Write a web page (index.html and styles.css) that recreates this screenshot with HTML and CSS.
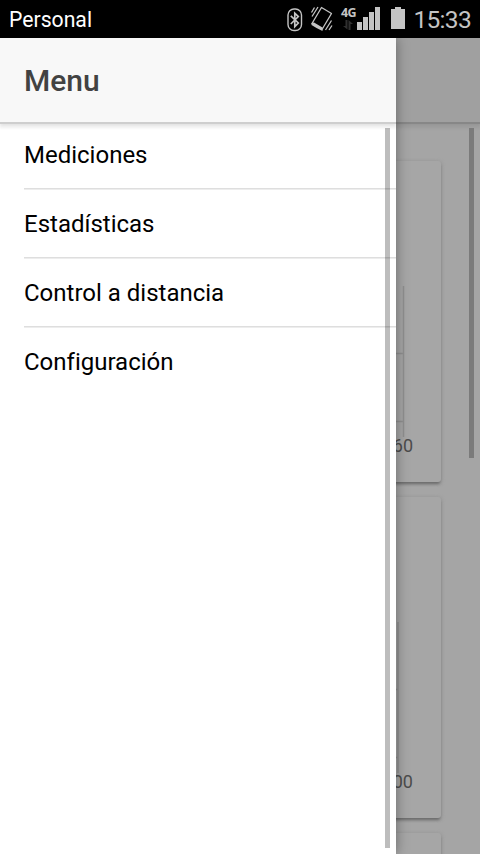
FILE: index.html
```html
<!DOCTYPE html>
<html lang="es">
<head>
<meta charset="utf-8">
<meta name="viewport" content="width=device-width, initial-scale=1">
<title>Menu</title>
<link rel="stylesheet" href="styles.css">
</head>
<body>
<header class="status">
  <span class="carrier">Personal</span>
  <div class="indicators">
    <svg class="bluetooth" width="16" height="24" viewBox="0 0 16 24" fill="none" stroke="#c4c4c4">
      <rect x="1" y="1" width="13.5" height="21.5" rx="6" stroke-width="1.4"/>
      <path d="M3.8 7.8 11.3 15 7.8 18.7V5.2L11.3 8.6 3.8 16" stroke-width="1.7"/>
    </svg>
    <svg class="vibrate" width="24" height="26" viewBox="0 0 24 26" fill="none" stroke="#c4c4c4" stroke-width="1.3">
      <path d="M11.5 1.5 21.5 7.5 12 23.5 2 17.5Z" stroke-linejoin="round"/>
      <path d="M1.5 17 4 16.5 12.5 21.5 12.5 25Q6 22 1.5 19Z" fill="#c4c4c4" stroke="none"/>
      <path d="M1.5 6.5 4.5 1.5M2 10.5 8 1M21.5 14.5 15.5 24M22 19.5 19 24"/>
    </svg>
    <div class="network">
      <span class="network-type">4G</span>
      <svg width="10" height="10" viewBox="0 0 10 10" fill="#303030">
        <path d="M2.5 0H4.5V9.5L0 6H2.5ZM5.5 0 10 4H7.5V10H5.5Z"/>
      </svg>
    </div>
    <svg class="signal" width="23" height="23" viewBox="0 0 23 23" fill="#c4c4c4">
      <path d="M0 15H5V23H0ZM6 10H11V23H6ZM12 5H17V23H12ZM18 0H23V23H18Z"/>
    </svg>
    <svg class="battery" width="14" height="22" viewBox="0 0 14 22" fill="#c4c4c4">
      <path d="M4 0H10V2H14V22H0V2H4Z"/>
    </svg>
    <time class="clock">15:33</time>
  </div>
</header>
<div class="app">
  <main class="page">
    <div class="page-toolbar"></div>
    <div class="cards">
      <section class="card">
        <svg class="chart" width="390" height="152" viewBox="0 0 390 152" stroke="#909090" stroke-width="1.5">
          <path d="M388.5 0V151M0 67.5H389M0 135.5H389"/>
        </svg>
        <div class="axis">60</div>
      </section>
      <section class="card">
        <svg class="chart" width="390" height="152" viewBox="0 0 390 152" stroke="#909090" stroke-width="1.5">
          <path d="M383 0V151M0 67.5H383M0 135.5H383"/>
        </svg>
        <div class="axis">100</div>
      </section>
      <section class="card"></section>
    </div>
    <div class="page-scrollbar"></div>
  </main>
  <aside class="drawer">
    <div class="drawer-toolbar"><h1>Menu</h1></div>
    <nav>
      <a class="item">Mediciones</a>
      <a class="item">Estadísticas</a>
      <a class="item">Control a distancia</a>
      <a class="item">Configuración</a>
    </nav>
    <div class="drawer-scrollbar"></div>
  </aside>
</div>
</body>
</html>
```
FILE: styles.css
```css
* {
  box-sizing: border-box;
}

body {
  margin: 0;
  height: 854px;
  display: flex;
  flex-direction: column;
  overflow: hidden;
  font-family: Roboto, sans-serif;
  font-variant-ligatures: none;
  background: #fff;
}

.status {
  height: 38px;
  flex: none;
  display: flex;
  justify-content: space-between;
  padding: 0 9px;
  background: #000;
}

.carrier {
  font-size: 21.2px;
  line-height: 40px;
  color: #fff;
}

.indicators {
  display: flex;
  align-items: flex-start;
}

.bluetooth {
  margin: 8px 7px 0 0;
}

.vibrate {
  margin: 6px 6px 0 0;
}

.network {
  width: 16px;
  display: flex;
  flex-direction: column;
  align-items: center;
  padding-top: 6px;
  margin-right: 1px;
}

.network-type {
  font: bold 12.5px/13px "Open Sans", sans-serif;
  letter-spacing: -0.5px;
  color: #c4c4c4;
}

.network svg {
  margin-top: 1px;
}

.signal {
  margin: 7px 11px 0 0;
}

.battery {
  margin: 7px 8px 0 0;
}

.clock {
  font-size: 24.5px;
  line-height: 39px;
  letter-spacing: -0.7px;
  color: #c4c4c4;
}

.app {
  flex: 1;
  position: relative;
  overflow: hidden;
}

.page {
  height: 816px;
  overflow: hidden;
  background: #a5a5a5;
}

.page-toolbar {
  height: 84px;
  background: #a0a0a0;
  box-shadow: 0 2px 0 #878787, 0 4px 3px #959595, 0 7px 2px #a1a1a1;
}

.cards {
  display: flex;
  flex-direction: column;
  gap: 15px;
  padding: 39px 39px 0 15px;
}

.card {
  height: 321px;
  flex: none;
  padding: 125px 28px 0 0;
  border-radius: 3px;
  background: #a6a6a6;
  box-shadow: 0 3px 3px -1px #6c6c6c, 0 1px 4px 0 #8b8b8b;
  display: flex;
  flex-direction: column;
  align-items: flex-end;
}

.chart {
  flex: none;
  margin-right: 8px;
}

.axis {
  margin-top: -2px;
  font-size: 18px;
  line-height: 20px;
  color: #4c4c4c;
}

.page-scrollbar {
  position: absolute;
  top: 90px;
  right: 6px;
  width: 5px;
  height: 330px;
  background: #7b7b7b;
}

.drawer {
  position: absolute;
  inset: 0 auto 0 0;
  width: 396px;
  background: #fff;
  box-shadow: 0 0 12px rgba(0, 0, 0, 0.38);
}

.drawer-toolbar {
  height: 84px;
  padding: 0 24px;
  background: #f8f8f8;
  box-shadow: 0 2px 0 #cecece, 0 4px 3px #e2e2e2, 0 7px 2px #f8f8f8;
  clip-path: inset(0 0 -10px 0);
}

h1 {
  margin: 0;
  font-size: 30px;
  font-weight: 500;
  line-height: 86px;
  color: #424242;
}

nav {
  padding: 0 0 0 24px;
}

.item {
  display: block;
  height: 69px;
  font-size: 24px;
  line-height: 66px;
  color: #000;
  background: linear-gradient(#dedede 0 1px, #ededed 1px 2px) 0 66px / 100% 2px no-repeat;
}

.item:last-child {
  background: none;
}

.drawer-scrollbar {
  position: absolute;
  top: 90px;
  right: 6px;
  bottom: 6px;
  width: 5px;
  background: rgba(0, 0, 0, 0.26);
}
```
